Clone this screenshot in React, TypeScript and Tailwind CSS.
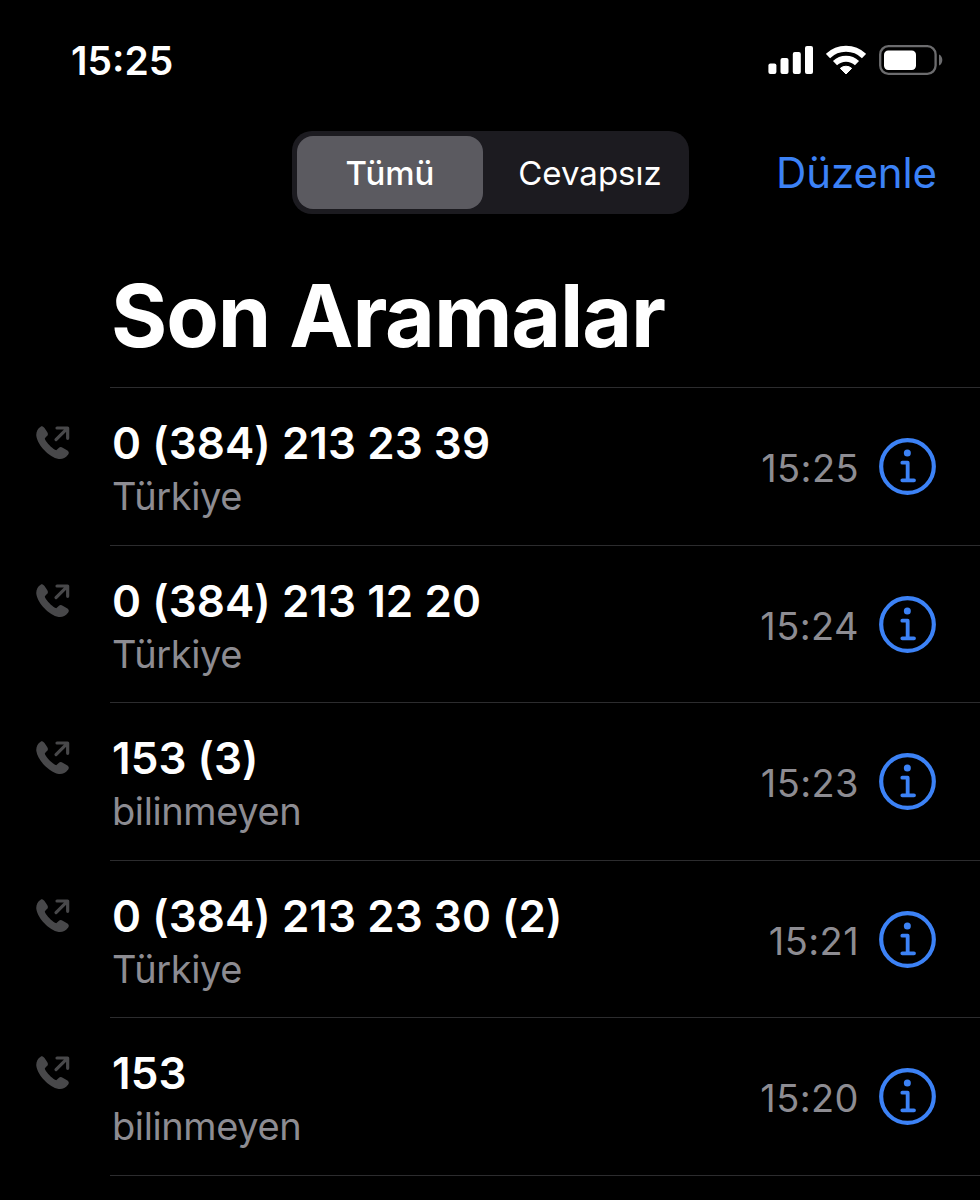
import { clsx } from "clsx";
import { useState } from "react";

type Filter = "all" | "missed";

type Call = {
  number: string;
  label: string;
  time: string;
};

const calls: Call[] = [
  { number: "0 (384) 213 23 39", label: "Türkiye", time: "15:25" },
  { number: "0 (384) 213 12 20", label: "Türkiye", time: "15:24" },
  { number: "153 (3)", label: "bilinmeyen", time: "15:23" },
  { number: "0 (384) 213 23 30 (2)", label: "Türkiye", time: "15:21" },
  { number: "153", label: "bilinmeyen", time: "15:20" }
];

export default function App() {
  const [filter, setFilter] = useState<Filter>("all");

  return (
    <main className="h-[1200px] w-[980px] overflow-hidden bg-black font-['Inter',sans-serif] text-white">
      <StatusBar />

      <header className="grid h-[83px] grid-cols-[292px_397px_1fr] items-center">
        <div className="col-start-2 flex h-[83px] rounded-[20px] bg-[#1c1b20] p-[5px]">
          <FilterButton label="Tümü" active={filter === "all"} onClick={() => setFilter("all")} />
          <FilterButton label="Cevapsız" active={filter === "missed"} onClick={() => setFilter("missed")} />
        </div>
        <button type="button" className="justify-self-end pr-[43px] text-[42px] leading-[52px] tracking-[-0.1px] text-[#3c82f6]">
          Düzenle
        </button>
      </header>

      <h1 className="mt-[52px] ml-[111px] text-[86px] leading-[100px] font-bold tracking-[-1.15px] whitespace-nowrap">Son Aramalar</h1>

      <ul className="mt-[21px]">
        {calls.map((call) => (
          <CallRow key={call.time} call={call} />
        ))}
      </ul>
      <div className="ml-[110px] h-px bg-[#2c2c2e]" />
    </main>
  );
}

function StatusBar() {
  return (
    <div className="flex h-[131px] items-start justify-between pt-10 pr-[37px] pl-[71px]">
      <span className="pt-px text-[39px] leading-10 font-semibold">15:25</span>
      <div className="flex h-10 items-center">
        <SignalIcon />
        <WifiIcon />
        <BatteryIcon />
      </div>
    </div>
  );
}

function FilterButton({ label, active, onClick }: { label: string; active: boolean; onClick: () => void }) {
  return (
    <button
      type="button"
      onClick={onClick}
      aria-pressed={active}
      className={clsx(
        "h-[73px] rounded-2xl text-[33px] leading-10",
        active ? "w-[186px] bg-[#5b5a60] font-medium" : "flex-1 pl-[13px]"
      )}
    >
      {label}
    </button>
  );
}

function CallRow({ call }: { call: Call }) {
  return (
    <li className="flex h-[157.6px]">
      <div className="w-[110px] shrink-0 pt-[39px] pl-9">
        <OutgoingCallIcon />
      </div>
      <div className="flex min-w-0 flex-1 border-t border-[#2c2c2e] pr-11">
        <div className="min-w-0 flex-1 pt-[29px] pl-0.5">
          <p className="text-[44px] leading-[52px] font-semibold tracking-[0.05px] whitespace-nowrap">{call.number}</p>
          <p className="mt-0.5 text-[38px] leading-[50px] tracking-[-0.4px] text-[#8d8c92]">{call.label}</p>
        </div>
        <span className="pt-[55px] text-[38px] leading-[50px] tracking-[0.4px] text-[#8d8c92]">{call.time}</span>
        <button type="button" aria-label={call.number} className="mt-[50px] ml-5 h-[57px] w-[57px] text-[#3c82f6]">
          <InfoIcon />
        </button>
      </div>
    </li>
  );
}

function OutgoingCallIcon() {
  return (
    <svg viewBox="0 0 102 102" className="h-[34px] w-[34px]" fill="none">
      <path
        d="M14 2C20-1 24 4 28 10L34 19C37 24 36 28 32 31L28 35C26 37 26 39 28 42C33 51 47 66 57 71C60 73 62 73 64 70L69 65C72 62 76 62 80 65L93 73C99 77 100 81 96 86C88 96 80 100 68 99C40 94 5 58 1 30C0 18 4 8 14 2Z"
        fill="#48484a"
      />
      <path d="M60 41L94 7M63 6H95V37" stroke="#48484a" strokeWidth="9.5" strokeLinecap="round" strokeLinejoin="round" />
    </svg>
  );
}

function InfoIcon() {
  return (
    <svg viewBox="0 0 171 171" className="h-full w-full" fill="none" stroke="currentColor">
      <circle cx="85.5" cy="85.5" r="79" strokeWidth="12.5" />
      <circle cx="85" cy="45" r="10.5" fill="currentColor" stroke="none" />
      <path d="M70 74H86V127M70 127H105" strokeWidth="11.5" strokeLinecap="round" strokeLinejoin="round" />
    </svg>
  );
}

function SignalIcon() {
  return (
    <svg viewBox="0 0 46 30" className="h-[30px] w-[46px]" fill="#fff">
      <rect x="0.4" y="18.5" width="8" height="10.5" rx="2" />
      <rect x="12.5" y="13" width="8" height="16" rx="2" />
      <rect x="24.8" y="7" width="8" height="22" rx="2" />
      <rect x="37" y="1" width="8" height="28" rx="2" />
    </svg>
  );
}

function WifiIcon() {
  return (
    <svg viewBox="0 0 120 90" className="ml-3 h-[30px] w-10" fill="none" stroke="#fff">
      <path d="M6 33A78 78 0 0 1 114 33" strokeWidth="18" />
      <path d="M27 54.5A48.5 48.5 0 0 1 93 54.5" strokeWidth="18" />
      <path d="M60 87L43 70A26 26 0 0 1 77 70Z" fill="#fff" strokeWidth="3" strokeLinejoin="round" />
    </svg>
  );
}

function BatteryIcon() {
  return (
    <svg viewBox="0 0 64 30" className="ml-[13px] h-[30px] w-16" fill="none">
      <rect x="1.2" y="1.2" width="55.4" height="27.6" rx="8.2" stroke="#6c6c6e" strokeWidth="2.3" />
      <rect x="5" y="5.5" width="32" height="19.5" rx="4.2" fill="#fff" />
      <path d="M60 9.5C64.4 11 64.4 19 60 20.5Z" fill="#6c6c6e" />
    </svg>
  );
}
